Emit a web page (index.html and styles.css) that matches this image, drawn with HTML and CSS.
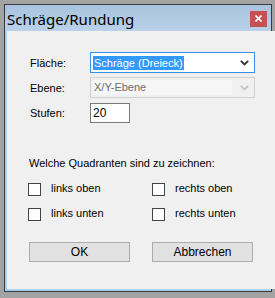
FILE: index.html
```html
<!DOCTYPE html>
<html>
<head>
<meta charset="utf-8">
<link rel="stylesheet" href="styles.css">
</head>
<body>
<div class="window">
  <div class="titlebar">
    <span class="title">Schräge/Rundung</span>
    <span class="close"><svg width="7" height="7" viewBox="0 0 7 7"><path d="M0.5 0.5L6.5 6.5M6.5 0.5L0.5 6.5" stroke="#fff" stroke-width="1.6"/></svg></span>
  </div>
  <div class="frame">
    <div class="client">
      <div class="form">
        <div class="row">
          <span class="label">Fläche:</span>
          <div class="combo active">
            <span class="sel">Schräge (Dreieck)</span>
            <svg class="arrow" width="9" height="6" viewBox="0 0 9 6"><path d="M0.8 0.8L4.5 4.5L8.2 0.8" fill="none" stroke="#333" stroke-width="1.8"/></svg>
          </div>
        </div>
        <div class="row">
          <span class="label">Ebene:</span>
          <div class="combo disabled">
            <span class="inner">X/Y-Ebene</span>
            <svg class="arrow" width="9" height="6" viewBox="0 0 9 6"><path d="M0.8 0.8L4.5 4.5L8.2 0.8" fill="none" stroke="#c4c4c4" stroke-width="1.8"/></svg>
          </div>
        </div>
        <div class="row row-input">
          <span class="label">Stufen:</span>
          <div class="textbox">20</div>
        </div>
      </div>
      <div class="question">Welche Quadranten sind zu zeichnen:</div>
      <div class="checks">
        <div class="check"><span class="box"></span><span>links oben</span></div>
        <div class="check"><span class="box"></span><span>rechts oben</span></div>
        <div class="check"><span class="box"></span><span>links unten</span></div>
        <div class="check"><span class="box"></span><span>rechts unten</span></div>
      </div>
      <div class="buttons">
        <div class="btn">OK</div>
        <div class="btn">Abbrechen</div>
      </div>
    </div>
  </div>
</div>
</body>
</html>
```
FILE: styles.css
```css
html, body {
  margin: 0;
  padding: 0;
}
body {
  background: #a3a3a3;
  width: 275px;
  height: 298px;
  padding: 4px 0 0 4px;
  box-sizing: border-box;
  font-family: "Liberation Sans", Arial, sans-serif;
  font-size: 11px;
  color: #000;
}
.window {
  width: 268px;
  height: 288px;
  box-sizing: border-box;
  border: 1px solid #3a3a3a;
  display: flex;
  flex-direction: column;
  background: #b4cde6;
}
.titlebar {
  height: 26px;
  display: flex;
  align-items: center;
  justify-content: space-between;
  padding: 0 4px 0 2px;
  background: linear-gradient(#a9c3de, #b9d1e9);
}
.title {
  font-family: "Noto Sans", "Open Sans", sans-serif;
  font-size: 15px;
  color: #000;
  margin-top: 2px;
}
.close {
  width: 17px;
  height: 16px;
  background: #c75050;
  display: flex;
  align-items: center;
  justify-content: center;
  margin-top: 1px;
}
.frame {
  flex: 1;
  padding: 0 2px 2px 2px;
  background: #a6d0f2;
  display: flex;
}
.client {
  flex: 1;
  background: #f0f0f0;
  padding: 21px 0 0 21px;
  box-sizing: border-box;
}
.form {
  display: flex;
  flex-direction: column;
  gap: 4px;
}
.row {
  display: flex;
  align-items: center;
}
.row-input {
  margin-top: 1px;
}
.label {
  width: 62px;
  padding-left: 2px;
  box-sizing: border-box;
}
.combo {
  width: 165px;
  height: 21px;
  box-sizing: border-box;
  display: flex;
  align-items: center;
  justify-content: space-between;
  padding: 0 5px 0 2px;
}
.combo.active {
  border: 1px solid #3c8fe6;
  background: #fff;
}
.combo.disabled {
  border: 1px solid #d0d0d0;
  background: #f0f0f0;
  padding: 2px 5px 2px 2px;
}
.sel {
  background: #3399ff;
  color: #fff;
  height: 14px;
  line-height: 14px;
  padding: 0 1px;
}
.inner {
  flex: 1;
  align-self: stretch;
  background: #f6f6f6;
  color: #6d6d6d;
  line-height: 15px;
  padding-left: 1px;
  margin-right: 8px;
}
.textbox {
  width: 40px;
  height: 20px;
  box-sizing: border-box;
  border: 1px solid #7a7a7a;
  background: #fff;
  line-height: 18px;
  padding-left: 2px;
  font-size: 12px;
}
.question {
  margin-top: 34px;
  margin-left: 1px;
  line-height: 13px;
}
.checks {
  margin-top: 13px;
  display: grid;
  grid-template-columns: 124px 124px;
  row-gap: 12px;
}
.check {
  display: flex;
  align-items: center;
  gap: 10px;
  height: 13px;
}
.check span:last-child {
  margin-top: -3px;
}
.box {
  width: 13px;
  height: 13px;
  box-sizing: border-box;
  border: 1px solid #444;
  background: #fff;
}
.buttons {
  margin-top: 21px;
  margin-left: 1px;
  display: flex;
  gap: 22px;
}
.btn {
  width: 101px;
  height: 20px;
  box-sizing: border-box;
  border: 1px solid #adadad;
  background: #e1e1e1;
  text-align: center;
  line-height: 18px;
  font-size: 12px;
}
```
